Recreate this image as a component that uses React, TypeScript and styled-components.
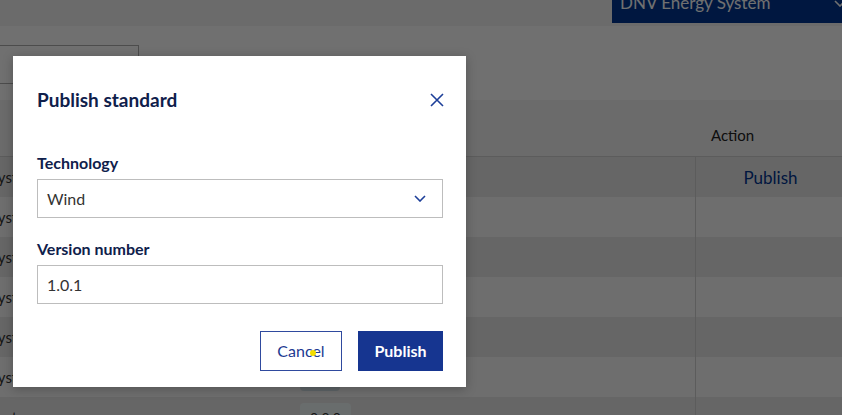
import styled, { createGlobalStyle } from "styled-components";

const GlobalStyle = createGlobalStyle`
  html, body {
    margin: 0;
    padding: 0;
  }
  body {
    font-family: Lato, "Noto Sans", sans-serif;
    color: #333;
  }
`;

const Page = styled.div`
  position: relative;
  width: 842px;
  height: 415px;
  overflow: hidden;
  background: #fff;
`;

const TopBar = styled.header`
  height: 26px;
  background: #f4f4f4;
  display: flex;
  justify-content: flex-end;
  align-items: flex-start;
`;

const EnvSwitch = styled.div`
  width: 230px;
  height: 23px;
  box-sizing: border-box;
  padding: 0 0 10px 8px;
  background: #003591;
  color: #fff;
  display: flex;
  align-items: flex-end;
  justify-content: space-between;
  overflow: hidden;
  font-size: 17px;
  line-height: 20px;

  svg {
    margin-right: -4px;
    margin-bottom: 6px;
  }
`;

const Tabs = styled.nav`
  display: flex;
  margin-top: 19px;
`;

const Tab = styled.div`
  width: 140px;
  height: 39px;
  margin-left: -1px;
  box-sizing: border-box;
  border: 1px solid #adadad;
`;

const Table = styled.div`
  margin-top: 16px;
  margin-left: -75px;
  display: grid;
  grid-template-columns: 365px 405px 150px;
`;

const HeadCell = styled.div`
  height: 57px;
  box-sizing: border-box;
  padding: 0 16px 12px;
  display: flex;
  align-items: flex-end;
  background: #f3f3f3;
  border-bottom: 1px solid #d1d1d1;
  font-size: 15px;
  color: #222;
`;

const Cell = styled.div<{ $shaded: boolean; $divider?: boolean; $center?: boolean }>`
  height: 40px;
  box-sizing: border-box;
  padding: 0 16px;
  display: flex;
  align-items: center;
  justify-content: ${(p) => (p.$center ? "center" : "flex-start")};
  background: ${(p) => (p.$shaded ? "#e9e9e9" : "#fafafa")};
  border-left: ${(p) => (p.$divider ? "1px solid #d1d1d1" : "none")};
  font-size: 15px;
  color: #333;
`;

const VersionPill = styled.span<{ $tone: "blue" | "pale" }>`
  display: inline-flex;
  align-items: center;
  height: 28px;
  margin-left: -6px;
  padding: 0 10px;
  border-radius: 4px;
  background: ${(p) => (p.$tone === "blue" ? "#d4e2e8" : "#f0f8f8")};
  font-size: 14px;
  color: #333;
`;

const RowLink = styled.span`
  font-size: 17px;
  color: #003591;
`;

const Backdrop = styled.div`
  position: absolute;
  inset: 0;
  background: rgba(0, 0, 0, 0.56);
`;

const Dialog = styled.div`
  position: absolute;
  left: 13px;
  top: 56px;
  width: 453px;
  height: 331px;
  box-sizing: border-box;
  padding: 32px 23px 16px 24px;
  background: #fff;
  box-shadow: 0 2px 10px rgba(0, 0, 0, 0.25);
  display: flex;
  flex-direction: column;
`;

const DialogHeader = styled.div`
  display: flex;
  align-items: center;
  justify-content: space-between;
  height: 24px;
`;

const Title = styled.h2`
  margin: 0;
  font-size: 19px;
  line-height: 24px;
  font-weight: 700;
  color: #0f204b;
`;

const CloseButton = styled.button`
  width: 16px;
  height: 16px;
  margin-right: -2px;
  padding: 0;
  border: none;
  background: none;
  display: flex;
  align-items: center;
  justify-content: center;
  cursor: pointer;
`;

const Form = styled.div`
  margin-top: 41px;
  display: flex;
  flex-direction: column;
  gap: 21px;
`;

const Field = styled.div`
  display: flex;
  flex-direction: column;
  gap: 6px;
`;

const Label = styled.label`
  font-size: 16px;
  line-height: 20px;
  font-weight: 700;
  color: #0f204b;
`;

const SelectBox = styled.div`
  height: 39px;
  box-sizing: border-box;
  padding: 0 16px 0 9px;
  border: 1px solid #bdbdbd;
  display: flex;
  align-items: center;
  justify-content: space-between;
  font-size: 16px;
  color: #333;
`;

const TextInput = styled.input`
  height: 39px;
  box-sizing: border-box;
  padding: 0 9px;
  border: 1px solid #bdbdbd;
  border-radius: 0;
  outline: none;
  font-family: inherit;
  font-size: 16px;
  color: #333;
`;

const Footer = styled.div`
  margin-top: 27px;
  display: flex;
  justify-content: flex-end;
  gap: 16px;
`;

const Button = styled.button<{ $primary?: boolean }>`
  position: relative;
  height: 40px;
  width: ${(p) => (p.$primary ? "85px" : "82px")};
  box-sizing: border-box;
  padding: 0 0 2px;
  border: ${(p) => (p.$primary ? "none" : "1px solid #2f4a9e")};
  background: ${(p) => (p.$primary ? "#163590" : "#fff")};
  color: ${(p) => (p.$primary ? "#fff" : "#1d3a91")};
  font-family: inherit;
  font-size: 16px;
  font-weight: ${(p) => (p.$primary ? 700 : 400)};
  cursor: pointer;
`;

// little click marker left on the cancel button
const ClickDot = styled.span`
  position: absolute;
  left: 49px;
  top: 18px;
  width: 6px;
  height: 6px;
  border-radius: 50%;
  background: #f3dd00;
`;

const Chevron = ({ color }: { color: string }) => (
  <svg width="12" height="7" viewBox="0 0 12 7" fill="none">
    <path d="M1 1l5 5 5-5" stroke={color} strokeWidth="1.6" />
  </svg>
);

const rows = [
  { name: "Energy System", version: "1.0.0", tone: "pale" as const, action: "Publish" },
  { name: "Energy System", version: "0.9.2", tone: "pale" as const },
  { name: "Energy System", version: "0.9.1", tone: "pale" as const },
  { name: "Energy System", version: "0.9.0", tone: "pale" as const },
  { name: "Energy System", version: "0.8.0", tone: "pale" as const },
  { name: "Energy System", version: "0.1", tone: "blue" as const },
  { name: "Energy System", version: "0.0.0", tone: "pale" as const },
];

export default function App() {
  return (
    <Page>
      <GlobalStyle />
      <TopBar>
        <EnvSwitch>
          <span>DNV Energy System</span>
          <Chevron color="#fff" />
        </EnvSwitch>
      </TopBar>
      <Tabs>
        <Tab />
      </Tabs>
      <Table>
        <HeadCell>Name</HeadCell>
        <HeadCell>Version</HeadCell>
        <HeadCell>Action</HeadCell>
        {rows.map((row, i) => (
          <>
            <Cell key={`n${i}`} $shaded={i % 2 === 0}>
              {row.name}
            </Cell>
            <Cell key={`v${i}`} $shaded={i % 2 === 0}>
              <VersionPill $tone={row.tone}>{row.version}</VersionPill>
            </Cell>
            <Cell key={`a${i}`} $shaded={i % 2 === 0} $divider $center>
              {row.action && <RowLink>{row.action}</RowLink>}
            </Cell>
          </>
        ))}
      </Table>

      <Backdrop />
      <Dialog role="dialog" aria-labelledby="publish-title">
        <DialogHeader>
          <Title id="publish-title">Publish standard</Title>
          <CloseButton aria-label="Close">
            <svg width="14" height="14" viewBox="0 0 14 14" fill="none">
              <path d="M1 1l12 12M13 1L1 13" stroke="#1d3f99" strokeWidth="1.6" />
            </svg>
          </CloseButton>
        </DialogHeader>
        <Form>
          <Field>
            <Label>Technology</Label>
            <SelectBox>
              <span>Wind</span>
              <Chevron color="#1d3f99" />
            </SelectBox>
          </Field>
          <Field>
            <Label htmlFor="version">Version number</Label>
            <TextInput id="version" defaultValue="1.0.1" />
          </Field>
        </Form>
        <Footer>
          <Button>
            Cancel
            <ClickDot />
          </Button>
          <Button $primary>Publish</Button>
        </Footer>
      </Dialog>
    </Page>
  );
}
